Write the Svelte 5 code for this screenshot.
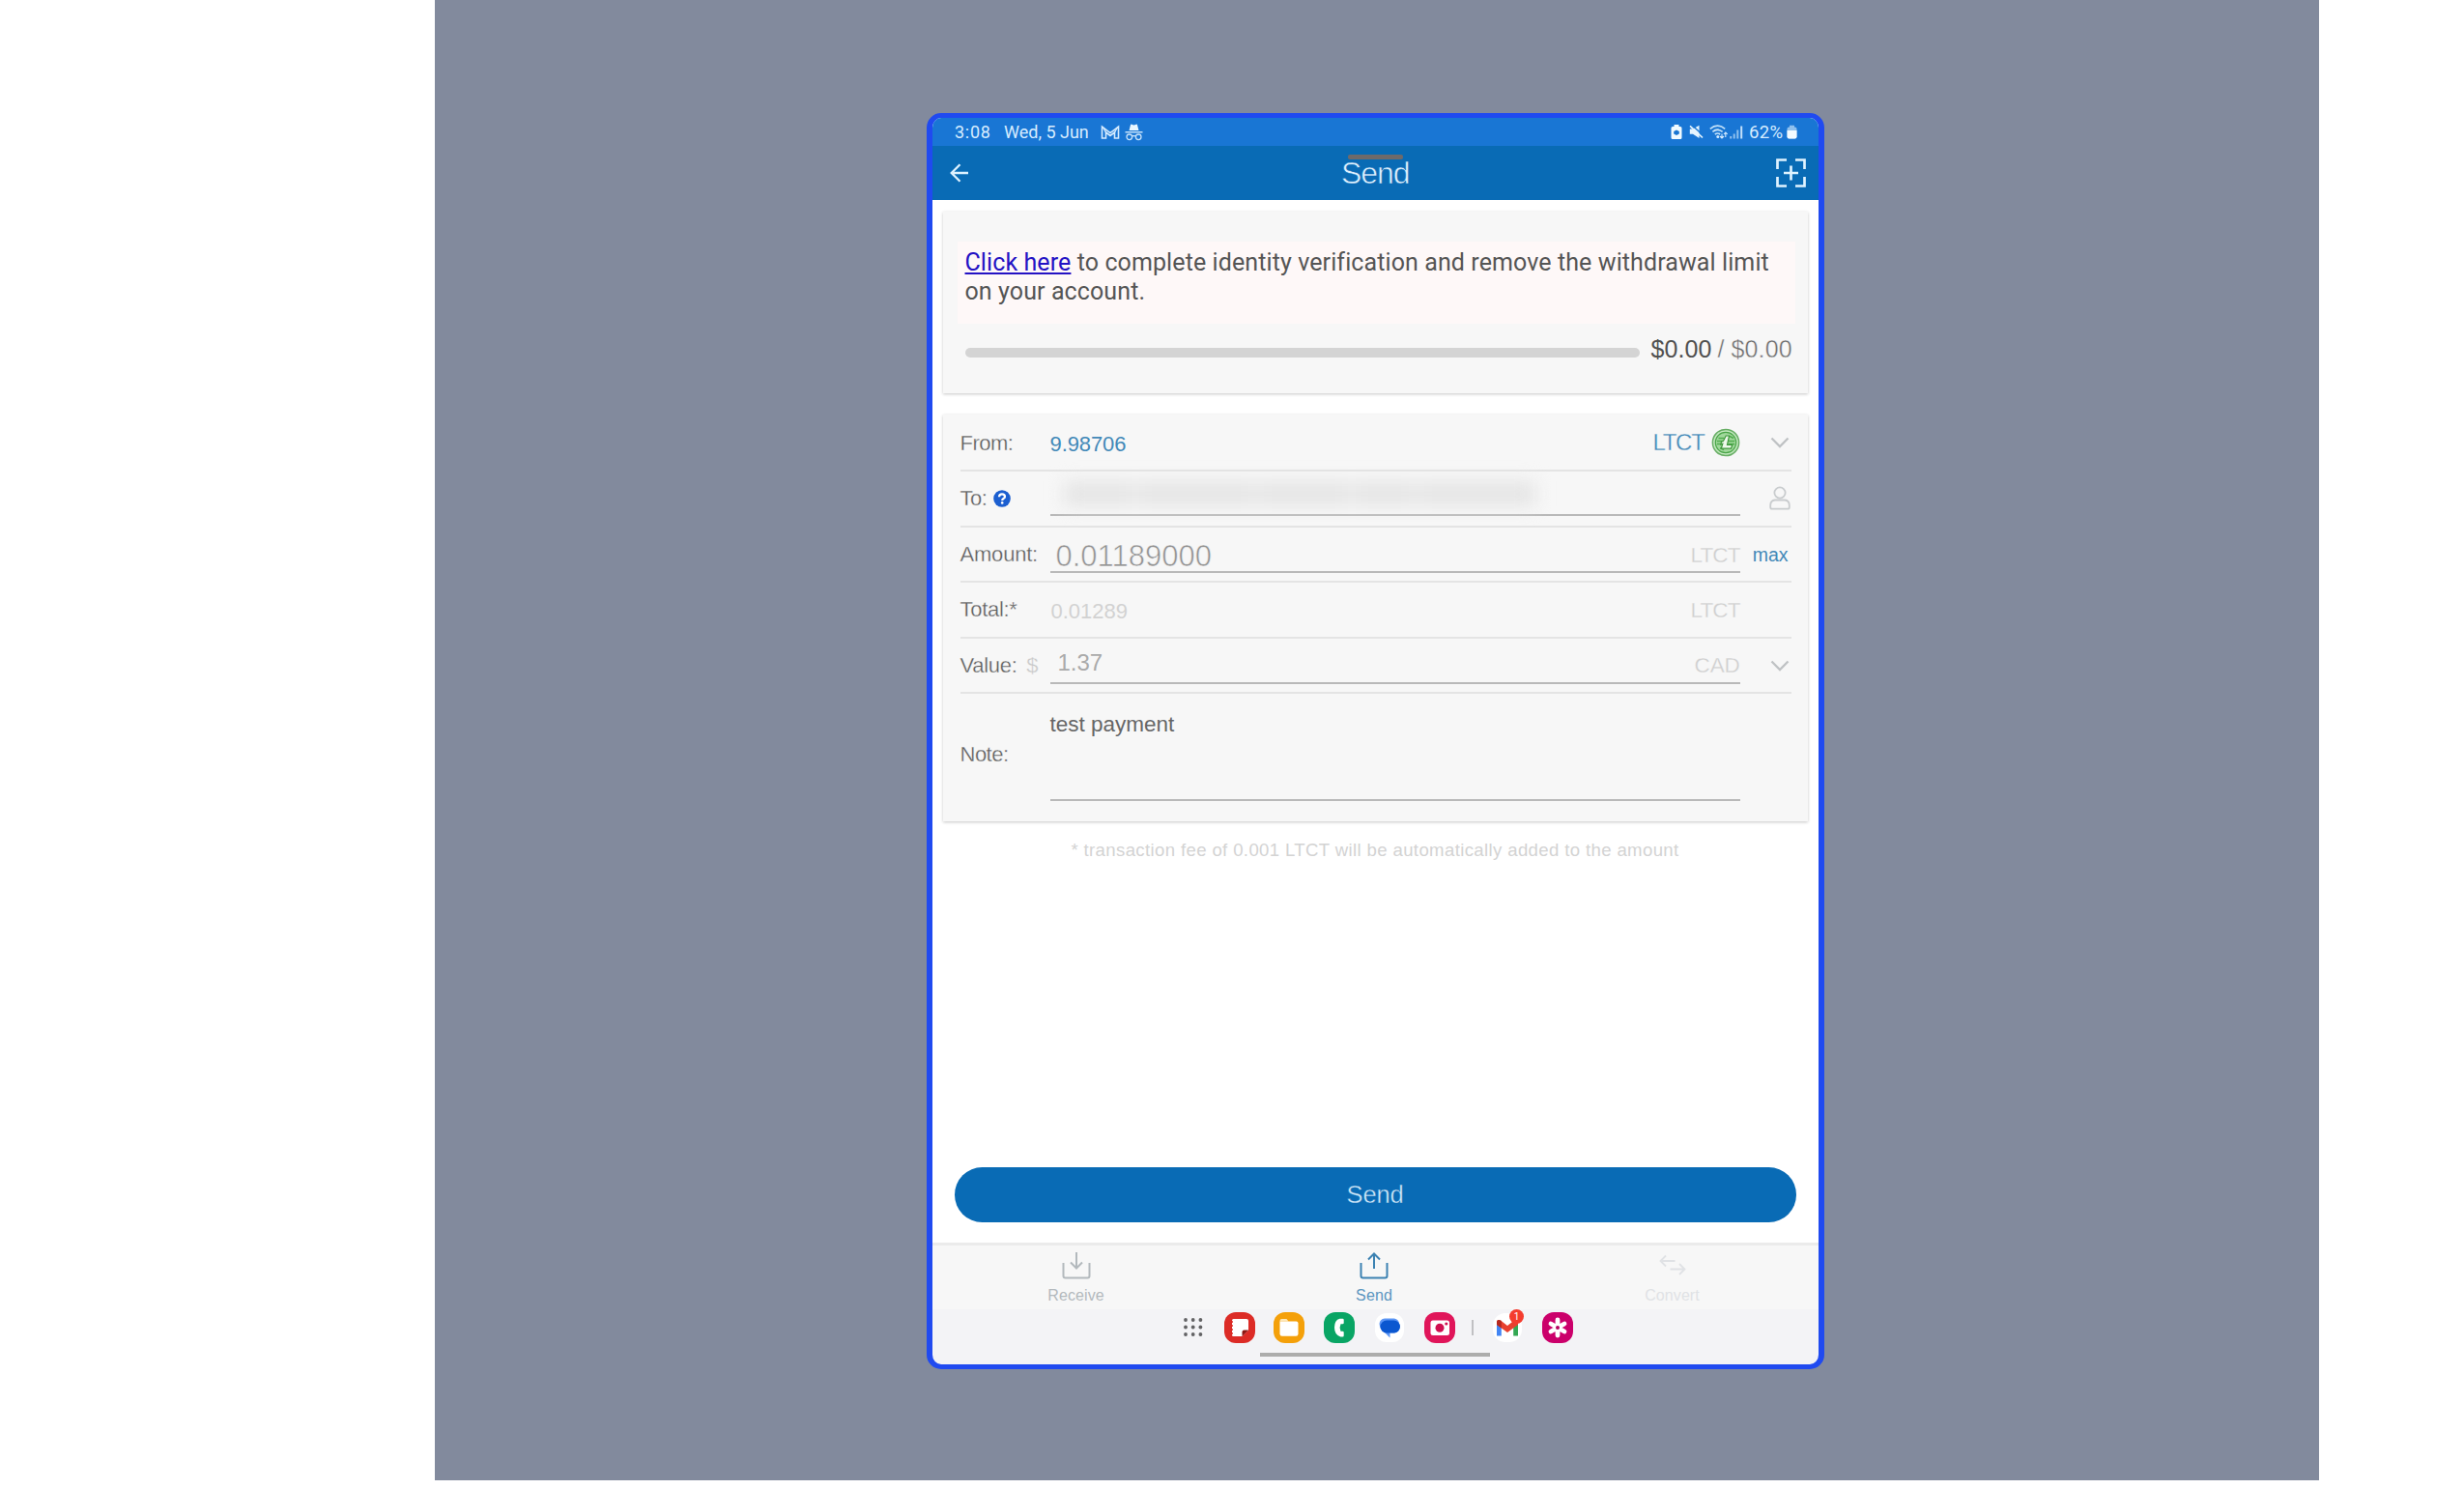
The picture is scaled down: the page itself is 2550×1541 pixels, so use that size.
<script>
  const redacted = [70, 8, 118, 6, 92, 8, 60, 6, 120];
  const dots = [0, 1, 2].flatMap((r) => [0, 1, 2].map((c) => [3 + c * 7.7, 3 + r * 7.5]));
</script>

{#snippet chevron()}
  <svg class="chev" width="20" height="12" viewBox="0 0 20 12"><path d="M1.5 1.5 10 10 18.5 1.5" fill="none" stroke="#bfc2c4" stroke-width="2.3" /></svg>
{/snippet}

<div class="stage">
  <div class="phone">
    <div class="status">
      <span class="time">3:08</span>
      <span class="date">Wed, 5 Jun</span>
      <svg class="mail" width="20" height="16" viewBox="0 0 20 16"><path d="M1.5 14V2.200L10 8.600 18.500 2.200V14H14.500V8L10 11.500 5.500 8V14Z" fill="none" stroke="#d6ecff" stroke-width="1.600" /><path d="M2 2l3.500 6M18 2l-3.500 6" stroke="#d6ecff" stroke-width="1.300" /></svg>
      <svg class="spy" width="19" height="18" viewBox="0 0 19 18"><path d="M4.500 7 6 1.200Q6.300.4 7.200.7L9.500 1.400 11.800.7Q12.700.4 13 1.200L14.500 7Z" fill="#e8f6ff" /><path d="M.5 8.800h18" stroke="#c4e0fa" stroke-width="1.400" /><g fill="none" stroke="#c4e0fa" stroke-width="1.300"><circle cx="4.800" cy="13.800" r="2.800" /><circle cx="14.200" cy="13.800" r="2.800" /><path d="M7.600 13q1.900-1 3.800 0" /></g></svg>
      <span class="spacer"></span>
      <svg width="12" height="16" viewBox="0 0 12 16"><path d="M3.500 0h5v2H10a1.500 1.500 0 0 1 1.500 1.500v10A1.500 1.500 0 0 1 10 15H2A1.500 1.500 0 0 1 .5 13.500v-10A1.500 1.500 0 0 1 2 2h1.500Z" fill="#f0faff" /><path d="M6 5.500 8.800 7v2.500L6 11 3.200 9.500V7Z" fill="#1976d2" /></svg>
      <svg class="mute" width="15" height="15" viewBox="0 0 15 15"><path d="M.8 4.500h3L10.500.8V14L4 9.800H.8Z" fill="#e6f5ff" /><path d="M2.500 0 15 11.500" stroke="#1976d2" stroke-width="1.400" /><path d="M1 1.300 14 13.500" stroke="#e6f5ff" stroke-width="1.700" /></svg>
      <svg class="wifi" width="19" height="15" viewBox="0 0 19 15"><g fill="none" stroke="#c4e2fa" stroke-width="1.700"><path d="M.8 4.300Q8.500-1.900 16.200 4.300" /><path d="M3.400 7.300Q8.500 3.200 13.600 7.300" /><path d="M5.800 10Q8.500 8 11.200 10" /></g><circle cx="8.800" cy="12.500" r="1.500" fill="#d6ecff" /><path d="M13 9.500v4.500m-2-2 2 2 2-2M16.800 13V8m-1.800 2 1.800-2 1.800 2" fill="none" stroke="#d6ecff" stroke-width="1.100" /></svg>
      <svg class="bars" width="14" height="14" viewBox="0 0 14 14"><path d="M1.200 11v2.500M4.700 8.500v5M8.300 4.500v9" stroke="#8fc0ee" stroke-width="2" /><path d="M12.200.5v13" stroke="#c4e0fa" stroke-width="2" /></svg>
      <span class="pct">62%</span>
      <svg class="batt" width="11" height="15" viewBox="0 0 11 15"><path d="M3 .8h5V3H3Z" fill="#8fc0ee" /><rect x=".5" y="2.500" width="10" height="12" rx="2" fill="#8fc0ee" /><path d="M.5 6h10v6.500a2 2 0 0 1-2 2h-6a2 2 0 0 1-2-2Z" fill="#f4fbff" /></svg>
    </div>

    <header>
      <svg width="20" height="20" viewBox="0 0 20 20"><path d="M19 10H2M10.500 1.200 1.700 10l8.800 8.800" fill="none" stroke="#dcf1ff" stroke-width="2.300" /></svg>
      <h1><i></i><span>Send</span></h1>
      <svg width="31" height="30" viewBox="0 0 31 30"><path d="M1.500 11V1.500H11M20 1.500h9.500V11M29.500 19v9.500H20M11 28.500H1.500V19" fill="none" stroke="#dff3ff" stroke-width="2.700" /><path d="M15.500 7.500v15M8 15h15" stroke="#dff3ff" stroke-width="2.700" /></svg>
    </header>

    <main>
      <section class="card limit">
        <p><a href="#verify">Click here</a> to complete identity verification and remove the withdrawal limit<br />on your account.</p>
        <div class="progress">
          <div class="track"></div>
          <span class="used">$0.00</span><span class="max-limit">/ $0.00</span>
        </div>
      </section>

      <section class="card form">
        <div class="row">
          <span class="lbl from">From:</span>
          <div class="field plain"><span class="balance">9.98706</span>
            <span class="coin-name">LTCT</span>
            <svg class="coin" width="30" height="30" viewBox="0 0 30 30"><circle cx="15" cy="15" r="13.600" fill="#c3e8bf" stroke="#68ae65" stroke-width="1.500" /><circle cx="15" cy="15" r="10.700" fill="#a0d89b" stroke="#4aa548" stroke-width="1.200" /><path d="M7.500 10.500h6M6 13.500h6M6 16.500h4M19 8.500l4 2M18 13.500h6M17.500 16.500h6.500M9 20.500l4 2" stroke="#4fab4d" stroke-width="1.400" /><path d="M15.200 8h3.300L16.500 17.500h5.200l-1.200 3.700H10.300l1.500-5-2 .8.700-2.800 2-.8Z" fill="#eef9ec" stroke="#3c963a" stroke-width="1.200" /></svg>
          </div>
          <div class="end">{@render chevron()}</div>
        </div>
        <div class="row">
          <span class="lbl">To:
            <svg class="help" width="18" height="18" viewBox="0 0 18 18"><circle cx="9" cy="9" r="8.800" fill="#1c5fd0" /><path d="M6 7.200Q6.100 4.400 9 4.400T12 7Q12 8.300 10.400 9.100 9.200 9.700 9.200 11" fill="none" stroke="#fff" stroke-width="2.200" /><circle cx="9.200" cy="13.400" r="1.300" fill="#fff" /></svg>
          </span>
          <div class="field to">
            <div class="redacted">{#each redacted as w, i}<span class:gap={i % 2 === 1} style:width="{w}px"></span>{/each}</div>
          </div>
          <div class="end"><svg class="person" width="22" height="25" viewBox="0 0 22 25"><g fill="none" stroke="#c9ccce" stroke-width="1.800"><circle cx="11" cy="7" r="5.600" /><path d="M6 14.500h10q4.800.5 4.800 5.500v2q0 1.700-1.700 1.700H2.900q-1.700 0-1.700-1.700v-2q0-5 4.800-5.500Z" /></g></svg></div>
        </div>
        <div class="row">
          <span class="lbl amt">Amount:</span>
          <div class="field"><span class="amount">0.01189000</span><span class="unit">LTCT</span></div>
          <div class="end max">max</div>
        </div>
        <div class="row">
          <span class="lbl tot">Total:*</span>
          <div class="field bare"><span class="total">0.01289</span><span class="unit">LTCT</span></div>
          <div class="end"></div>
        </div>
        <div class="row">
          <span class="lbl val">Value: <span class="cur">$</span></span>
          <div class="field"><span class="value">1.37</span><span class="unit cad">CAD</span></div>
          <div class="end">{@render chevron()}</div>
        </div>
        <div class="row note">
          <span class="lbl">Note:</span>
          <div class="field">test payment</div>
          <div class="end"></div>
        </div>
      </section>

      <p class="fee"><span>* transaction fee of 0.001 LTCT will be automatically added to the amount</span></p>
      <button>Send</button>
    </main>

    <nav>
      <div class="tab receive"><svg width="30" height="28" viewBox="0 0 30 28"><path d="M1.500 11v13.500q0 2 2 2h23q2 0 2-2V11" fill="none" stroke="#b3b9bd" stroke-width="2" /><path d="M15 0v16.500M9 10.500l6 6 6-6" fill="none" stroke="#b3b9bd" stroke-width="2" /></svg>Receive</div>
      <div class="tab send"><svg width="30" height="28" viewBox="0 0 30 28"><path d="M1.500 11v13.500q0 2 2 2h23q2 0 2-2V11" fill="none" stroke="#3c82b2" stroke-width="2" /><path d="M15 17V1.500M9 7.500l6-6 6 6" fill="none" stroke="#3c82b2" stroke-width="2" /></svg>Send</div>
      <div class="tab convert"><svg width="30" height="28" viewBox="0 0 30 28"><path d="M17.500 9H2.500M8 3.500 2.500 9 8 14.500M12.500 17.500h15M22 12l5.500 5.500L22 23" fill="none" stroke="#e0e2e5" stroke-width="1.800" /></svg>Convert</div>
    </nav>

    <div class="dock">
      <svg class="apps" width="22" height="22" viewBox="0 0 22 22">{#each dots as [x, y]}<circle cx={x} cy={y} r="1.900" fill="#626264" />{/each}</svg>
      <svg class="app" width="32" height="32" viewBox="0 0 32 32"><rect width="32" height="32" rx="12" fill="#dc2b26" /><path d="M9.500 7H23q2 0 2 2v9.500L18.500 25h-9q-1.500 0-1.500-1.500v-15Q8 7 9.500 7Z" fill="#fff" /><path d="M25 18.500h-4.500q-2 0-2 2V25Z" fill="#8d1612" /><path d="M7 10h2M7 14h2M7 18h2M7 22h2" stroke="#dc2b26" stroke-width="1.300" /></svg>
      <svg class="app" width="32" height="32" viewBox="0 0 32 32"><rect width="32" height="32" rx="12" fill="#f4a00a" /><path d="M6.500 9q0-2 2-2h5l2 2.500h-9Z" fill="#fde7b8" /><path d="M6.500 9.500h17q2 0 2 2v11q0 2.300-2.300 2.300H8.800q-2.300 0-2.300-2.300Z" fill="#fff" /></svg>
      <svg class="app" width="32" height="32" viewBox="0 0 32 32"><rect width="32" height="32" rx="12" fill="#09a565" /><path d="M16.500 6.700h3q1.200 0 1.200 1.200v3.200q0 1.200-1.200 1.200h-2q-1.800 3.700 0 7.400h2q1.200 0 1.200 1.200v3.400q0 1.200-1.200 1.200h-2.200q-6.300-2-6.300-9.700t5.500-9.100Z" fill="#fff" /></svg>
      <svg class="app" width="32" height="32" viewBox="0 0 32 32"><rect x="1" y="1" width="30" height="30" rx="12" fill="#fff" /><path d="M11 6.500h10q4.500 1 5 5l.5 4q0 5-5 6h-5v5L12 22Q6 19 5.500 12 6 7 11 6.500Z" fill="#5b95f5" /><rect x="6.500" y="8.500" width="20.500" height="13" rx="6.500" fill="#0b57d0" /></svg>
      <svg class="app" width="32" height="32" viewBox="0 0 32 32"><rect width="32" height="32" rx="12" fill="#e0155a" /><rect x="6.500" y="8.500" width="19.500" height="15.500" rx="2.500" fill="#fff" /><circle cx="16" cy="16.300" r="4.500" fill="#d00f50" /><circle cx="22.800" cy="12" r="1.600" fill="#d00f50" /></svg>
      <i class="sep"></i>
      <div class="gmail">
        <svg class="app" width="32" height="32" viewBox="0 0 32 32"><rect x="1" y="1" width="30" height="30" rx="13" fill="#fff" /><path d="M5 10.500 9.800 14v10.500H5Z" fill="#4285f4" /><path d="M27 10.500 22.200 14v10.500H27Z" fill="#34a853" /><path d="M5 13V9.500Q6 7 9 8.500L16 14l7-5.500h4V13l-11 8Z" fill="#e8402f" /><path d="M5 13V9.500Q6 7 9.800 9v7.500Z" fill="#b5281e" /></svg>
        <b>1</b>
      </div>
      <svg class="app" width="32" height="32" viewBox="0 0 32 32"><rect width="32" height="32" rx="12" fill="#cb006b" /><g stroke="#fff" stroke-width="4.800" stroke-linecap="round"><path d="M16 8v16M9 12l14 8M23 12 9 20" /></g><circle cx="16" cy="16" r="2" fill="#b50060" /></svg>
    </div>
    <div class="home"></div>
  </div>
</div>

<style>
  :global(body) { background: #fff; }
  .stage { box-sizing: border-box; width: 1950px; height: 1532px; margin-left: 450px; padding: 117px 0 0 509px; background: #828a9d; font-family: "Liberation Sans", Arial, sans-serif; color: #666; }
  .phone { box-sizing: border-box; width: 928.500px; height: 1300px; border: 5px solid #204af0; border-width: 5px 6px 5px 6px; border-radius: 15px; overflow: hidden; background: linear-gradient(#fff 1240px, #f3f3f6 1240px); display: flex; flex-direction: column; }
  svg { display: block; flex: none; }

  .status { box-sizing: border-box; height: 28.500px; padding: 1px 22px 0 23px; background: #1976d4; display: flex; align-items: center; font-family: Roboto, sans-serif; font-size: 18px; line-height: 28px; color: #d6ecff; white-space: pre; }
  .time { width: 51px; letter-spacing: .7px; }
  .date { width: 99.500px; letter-spacing: 0; }
  .mail { margin-right: 5px; }
  .spacer { flex: 1; }
  .mute { margin-left: 7px; }
  .wifi { margin-left: 6px; }
  .bars { margin-left: 2px; }
  .pct { margin-left: 6px; width: 37.500px; font-size: 18.500px; letter-spacing: .4px; }
  .batt { margin-left: 1px; }

  header { box-sizing: border-box; height: 56.500px; padding: 0 12px 0 18px; background: #096bb5; display: flex; align-items: center; justify-content: space-between; }
  h1 { position: relative; margin: 1px 0 0 5px; font-size: 32px; font-weight: 400; line-height: 36px; letter-spacing: -1px; color: #ddf1ff; -webkit-text-stroke: .6px #096bb5; }
  h1 span { position: relative; }
  h1 i { position: absolute; left: 7px; top: -1px; width: 57px; height: 5px; border-radius: 2px; background: #6e6a6b; }

  main { flex: 1; padding: 12px 11px 0 10.500px; display: flex; flex-direction: column; align-items: stretch; }
  .card { box-sizing: border-box; background: #f7f7f7; width: 895px; box-shadow: 0 1px 3px rgba(0, 0, 0, .22); }
  .limit { height: 188px; margin-bottom: 22px; padding: 31px 13px 0 15px; }
  .limit p { box-sizing: border-box; height: 85px; margin: 0; padding: 7px 0 0 8px; background: #fef8f8; font: 25px/30px Roboto, sans-serif; letter-spacing: .1px; color: #555; white-space: nowrap; }
  .limit a { color: #2412c4; text-underline-offset: 2px; text-decoration-thickness: 2px; }
  .progress { display: flex; align-items: center; height: 30px; margin: 11px 0 0 8.500px; font-size: 25px; line-height: 30px; white-space: nowrap; letter-spacing: .1px; }
  .track { width: 698px; height: 9.500px; border-radius: 5px; background: #d4d4d4; margin: 8px 11.500px 0 0; }
  .used { width: 69px; color: #505050; }
  .max-limit { color: #6c6c6c; -webkit-text-stroke: .4px #f7f7f7; }

  .form { height: 420.500px; padding: 1.400px 17px 0 18px; font-size: 22px; }
  .row { box-sizing: border-box; display: grid; grid-template-columns: 93px 714px 53px; height: 57.600px; border-bottom: 2px solid #e4e4e4; }
  .lbl { display: flex; align-items: center; line-height: 26px; letter-spacing: -.5px; padding-top: 1px; white-space: pre; color: #5c5c5c; -webkit-text-stroke: .3px #f7f7f7; }
  .amt { letter-spacing: -.2px; }
  .tot, .val { letter-spacing: -.3px; }
  .help { margin: 0 0 0 1px; }
  .cur { color: #c8c8c8; margin-left: 4px; }
  .field { display: flex; align-items: flex-end; line-height: 1; border-bottom: 2px solid #b9b9b9; margin-bottom: 8px; }
  .field.plain { align-items: center; border: 0; margin: 0; }
  .field.bare { border-color: transparent; }
  .field.to { margin-bottom: 9.500px; align-items: flex-start; }
  .balance { flex: 1; color: #4389b8; padding-top: 4px; letter-spacing: -.1px; }
  .coin-name { font-size: 24px; letter-spacing: -1.300px; color: #4389b8; margin-right: 7px; -webkit-text-stroke: .3px #f7f7f7; }
  .end { display: flex; align-items: center; justify-content: flex-end; }
  .chev { margin-right: 2px; }
  .person { margin-right: 1px; }
  .redacted { display: flex; height: 26px; margin: 10px 0 0 14px; filter: blur(9px); }
  .redacted span { background: #e5e5e5; }
  .redacted .gap { background: #ededed; }
  .amount { flex: 1; padding: 0 0 .5px 6px; font-size: 31px; letter-spacing: 0; color: #939393; -webkit-text-stroke: .6px #f7f7f7; }
  .unit { padding-bottom: 5px; font-size: 22.500px; letter-spacing: -.9px; color: #cfcfcf; -webkit-text-stroke: .3px #f7f7f7; }
  .cad { padding-bottom: 5.500px; letter-spacing: -.2px; }
  .total { flex: 1; padding: 0 0 5px 1px; color: #d2d2d2; }
  .value { flex: 1; padding: 0 0 8.500px 8px; font-size: 24px; color: #aaa; }
  .max { font-size: 19.500px; color: #4389b8; padding: 3px 3px 0 0; }
  .note { height: 131px; border: 0; }
  .note .lbl { padding-bottom: 7px; }
  .note .field { align-items: flex-start; margin-bottom: 20px; padding-top: 21px; font-size: 22.500px; color: #666; }
  .fee { margin: 19.500px 0 0; text-align: center; font-size: 18.600px; line-height: 22px; letter-spacing: .36px; color: #d3d3d3; white-space: nowrap; }
  button { margin: auto 12px 21.500px; height: 56.500px; border: 0; border-radius: 29px; padding: 0; background: #096bb5; color: #cfe9fa; font: 25.500px/57px "Liberation Sans", Arial, sans-serif; letter-spacing: -.2px; -webkit-text-stroke: .4px #096bb5; }

  nav { box-sizing: border-box; height: 69px; border-top: 3px solid #ebebeb; background: #f7f7f7; display: flex; justify-content: center; }
  .tab { flex: none; width: 308.500px; padding-top: 7px; display: flex; flex-direction: column; align-items: center; gap: 8px; font-size: 16px; line-height: 18px; letter-spacing: .1px; }
  .receive { color: #b3b9bd; margin-left: -2.500px; margin-right: 0; }
  .receive, .convert { width: 308.500px; }
  .send { color: #5b95bf; }
  .convert { color: #e0e2e5; }
  .dock { height: 38px; background: #f3f3f6; display: flex; align-items: center; padding-left: 259px; }
  .apps { margin-right: 20.500px; }
  .app { margin-right: 19.900px; }
  .sep { width: 2px; height: 16px; background: #c0c0c3; margin: 0 18.500px 0 -2.500px; }
  .gmail { position: relative; }
  .gmail b { position: absolute; left: 18px; top: -3px; width: 15px; height: 15px; border-radius: 8px; background: #f43c2e; color: #fff; font: 10px/15px Roboto, sans-serif; text-align: center; }
  .home { box-sizing: border-box; flex: none; height: 19px; background: #acacac; background-clip: content-box; padding: 7px 340px 8px 339px; }
</style>
